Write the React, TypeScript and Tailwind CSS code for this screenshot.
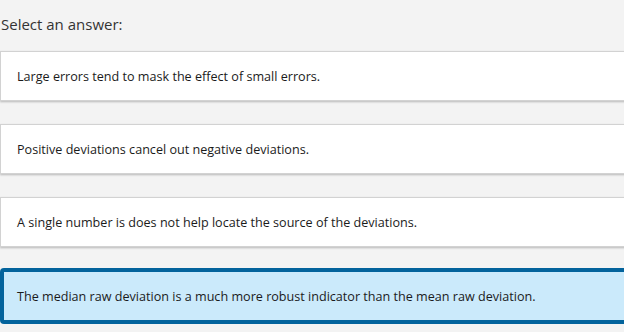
const answers = [
  { text: 'Large errors tend to mask the effect of small errors.', selected: false },
  { text: 'Positive deviations cancel out negative deviations.', selected: false },
  { text: 'A single number is does not help locate the source of the deviations.', selected: false },
  { text: 'The median raw deviation is a much more robust indicator than the mean raw deviation.', selected: true },
];

export default function App() {
  return (
    <div
      className="h-[332px] w-[624px] overflow-hidden bg-[#f3f3f3] text-[#1b1b1b]"
      style={{ fontFamily: '"Open Sans", "Noto Sans", sans-serif' }}
    >
      <div className="pl-[1px] pt-[13px] text-[15px] leading-[22px] text-[#333]">Select an answer:</div>
      <div className="mt-[16px] flex w-[640px] flex-col gap-[23px]">
        {answers.map((a) =>
          a.selected ? (
            <div
              key={a.text}
              className="-mt-[2px] flex h-[56px] items-center rounded-[4px] border-[4px] border-[#03639c] bg-[#cbeafb] pl-[13px] pt-[2px] text-[12.6px]"
            >
              {a.text}
            </div>
          ) : (
            <div
              key={a.text}
              className="flex h-[50px] items-center border border-[#d2d2d2] bg-white pl-[16px] pt-[3px] text-[12.6px] shadow-[0_1px_2px_rgba(0,0,0,0.25)]"
            >
              {a.text}
            </div>
          )
        )}
      </div>
    </div>
  );
}
